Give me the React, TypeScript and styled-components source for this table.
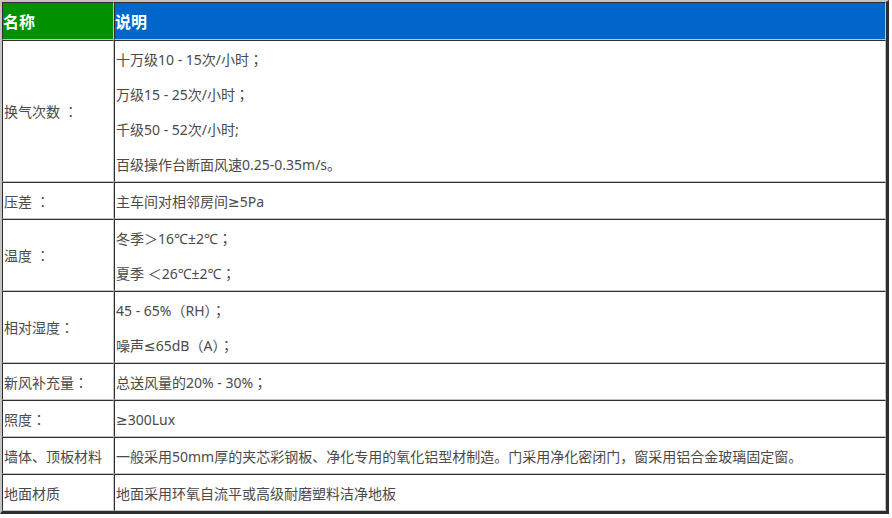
import React from "react";
import styled, { createGlobalStyle } from "styled-components";

const Global = createGlobalStyle`
  html, body { margin: 0; padding: 0; background: #fff; }
  body { font-family: "Noto Sans", "DejaVu Sans", "Noto Sans CJK JP", sans-serif; }
`;

const Table = styled.table`
  width: 889px;
  border-collapse: separate;
  border-spacing: 0;
  border-style: solid;
  border-width: 2px 3px 3px 2px;
  border-color: #c4c4c4 #2e2e2e #2e2e2e #c4c4c4;
  table-layout: fixed;
`;

const Cell = styled.td<{ $w?: number }>`
  border-style: solid;
  border-width: 1px;
  border-color: #2e2e2e #c4c4c4 #c4c4c4 #2e2e2e;
  padding: 0 0 0 1px;
  vertical-align: middle;
  font-size: 14px;
  color: #4a4a4a;
  ${(p) => (p.$w ? `width: ${p.$w}px;` : "")}
  white-space: nowrap;
`;

const HeadCell = styled.th<{ $bg: string; $w?: number }>`
  border-style: solid;
  border-width: 1px;
  border-color: #2e2e2e #c4c4c4 #c4c4c4 #2e2e2e;
  background: ${(p) => p.$bg};
  color: #fff;
  text-align: left;
  font-family: "Noto Sans CJK SC", sans-serif;
  font-size: 16px;
  font-weight: bold;
  height: 36px;
  padding: 0;
  line-height: 36px;
  ${(p) => (p.$w ? `width: ${p.$w}px;` : "")}
`;

const Line = styled.div`
  height: 35px;
  line-height: 37px;
  overflow: hidden;
`;

type Row = { label: string; lines: string[] };

const rows: Row[] = [
  {
    label: "换气次数 ：",
    lines: [
      "十万级10 - 15次/小时；",
      "万级15 - 25次/小时；",
      "千级50 - 52次/小时;",
      "百级操作台断面风速0.25-0.35m/s。",
    ],
  },
  { label: "压差 ：", lines: ["主车间对相邻房间≥5Pa"] },
  { label: "温度 ：", lines: ["冬季＞16℃±2℃；", "夏季 ＜26℃±2℃；"] },
  { label: "相对湿度：", lines: ["45 - 65%（RH）；", "噪声≤65dB（A）；"] },
  { label: "新风补充量：", lines: ["总送风量的20% - 30%；"] },
  { label: "照度：", lines: ["≥300Lux"] },
  {
    label: "墙体、顶板材料",
    lines: [
      "一般采用50mm厚的夹芯彩钢板、净化专用的氧化铝型材制造。门采用净化密闭门，窗采用铝合金玻璃固定窗。",
    ],
  },
  { label: "地面材质", lines: ["地面采用环氧自流平或高级耐磨塑料洁净地板"] },
];

export default function App() {
  return (
    <>
      <Global />
      <Table>
        <thead>
          <tr>
            <HeadCell $bg="#009000" $w={110}>名称</HeadCell>
            <HeadCell $bg="#0066cc">说明</HeadCell>
          </tr>
        </thead>
        <tbody>
          {rows.map((r) => (
            <tr key={r.label}>
              <Cell $w={110}>{r.label}</Cell>
              <Cell>
                {r.lines.map((l) => (
                  <Line key={l}>{l}</Line>
                ))}
              </Cell>
            </tr>
          ))}
        </tbody>
      </Table>
    </>
  );
}
